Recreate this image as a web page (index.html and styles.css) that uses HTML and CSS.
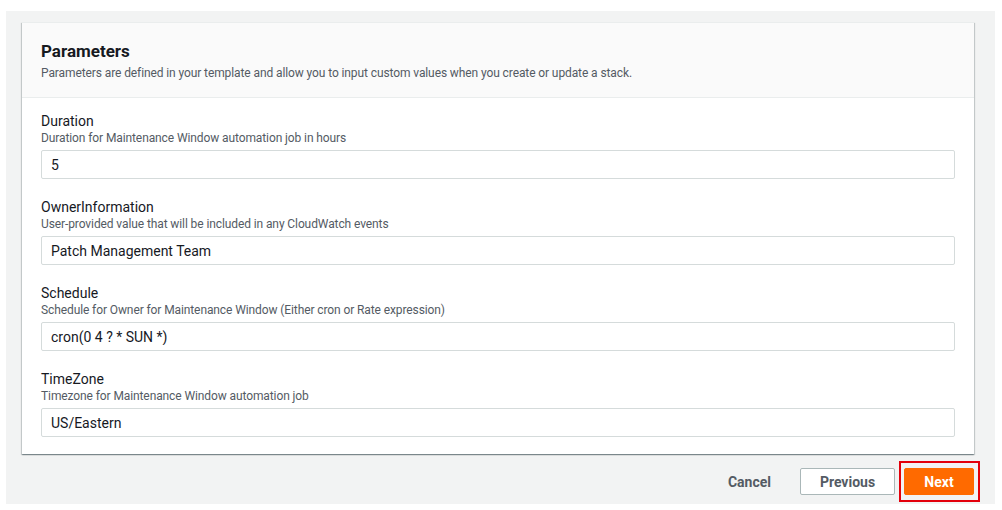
FILE: index.html
```html
<!DOCTYPE html>
<html lang="en">
<head>
  <meta charset="UTF-8">
  <meta name="viewport" content="width=device-width, initial-scale=1.0">
  <title>Specify stack details</title>
  <link rel="stylesheet" href="styles.css">
</head>
<body>
  <div class="page">
    <!-- Parameters panel -->
    <div class="panel">
      <div class="panel-header">
        <h2>Parameters</h2>
        <p>Parameters are defined in your template and allow you to input custom values when you create or update a stack.</p>
      </div>
      <div class="panel-body">
        <div class="form-group">
          <label for="duration">Duration</label>
          <span class="hint">Duration for Maintenance Window automation job in hours</span>
          <input type="text" id="duration" value="5">
        </div>
        <div class="form-group">
          <label for="owner">OwnerInformation</label>
          <span class="hint">User-provided value that will be included in any CloudWatch events</span>
          <input type="text" id="owner" value="Patch Management Team">
        </div>
        <div class="form-group">
          <label for="schedule">Schedule</label>
          <span class="hint">Schedule for Owner for Maintenance Window (Either cron or Rate expression)</span>
          <input type="text" id="schedule" value="cron(0 4 ? * SUN *)">
        </div>
        <div class="form-group">
          <label for="timezone">TimeZone</label>
          <span class="hint">Timezone for Maintenance Window automation job</span>
          <input type="text" id="timezone" value="US/Eastern">
        </div>
      </div>
    </div>

    <!-- Wizard actions -->
    <div class="actions">
      <button type="button" class="btn-link">Cancel</button>
      <button type="button" class="btn-normal">Previous</button>
      <span class="highlight">
        <button type="submit" class="btn-primary">Next</button>
      </span>
    </div>
  </div>
</body>
</html>
```

FILE: styles.css
```css
body {
  font-family: Roboto, "Liberation Sans", sans-serif;
  margin: 0;
  padding: 0;
  background-color: #fff;
}

.page {
  margin: 11px 7px 0 6px;
  height: 493px;
  box-sizing: border-box;
  padding: 11px 21px 0 16px;
  background-color: #f2f3f3;
}

.panel {
  background-color: #fff;
  box-shadow: 0 1px 1px 0 rgba(0, 28, 36, 0.3), 1px 1px 1px 0 rgba(0, 28, 36, 0.15), -1px 1px 1px 0 rgba(0, 28, 36, 0.15);
  border-top: 1px solid #eaeded;
}

.panel-header {
  background-color: #fafafa;
  border-bottom: 1px solid #eaeded;
  padding: 17px 19px 15px;
}

.panel-header h2 {
  margin: 0;
  font-size: 17px;
  line-height: 22px;
  font-weight: 700;
  color: #16191f;
}

.panel-header p {
  margin: 3px 0 0;
  font-size: 12px;
  line-height: 17px;
  letter-spacing: -0.1px;
  color: #545b64;
}

.panel-body {
  padding: 14px 19px 17px;
}

.form-group {
  display: flex;
  flex-direction: column;
  margin-bottom: 19px;
}

.form-group:last-child {
  margin-bottom: 0;
}

.form-group label {
  font-size: 14px;
  line-height: 18px;
  color: #16191f;
}

.form-group .hint {
  font-size: 12px;
  line-height: 17px;
  letter-spacing: -0.1px;
  color: #545b64;
}

.form-group input {
  margin-top: 3px;
  height: 29px;
  box-sizing: border-box;
  padding: 0 9px;
  border: 1px solid #d5dbdb;
  border-radius: 2px;
  font-family: inherit;
  font-size: 14px;
  color: #16191f;
  background-color: #fff;
}

.actions {
  display: flex;
  justify-content: flex-end;
  align-items: center;
  margin-top: 14px;
}

.actions button {
  font-family: inherit;
  font-size: 14px;
  font-weight: 700;
  height: 27px;
  border-radius: 2px;
  cursor: pointer;
}

.btn-link {
  background: none;
  border: none;
  color: #545b64;
  padding: 0 16px;
  margin-right: 13px;
}

.btn-normal {
  width: 95px;
  background-color: #fff;
  border: 1px solid #aab7b8;
  color: #545b64;
}

.highlight {
  display: flex;
  margin: -7px -6px -7px 4px;
  padding: 5px 4px 5px 3px;
  border: 2px solid #e3000b;
}

.btn-primary {
  width: 70px;
  background-color: #ff6a00;
  border: 1px solid #ff6a00;
  color: #fff;
}
```
